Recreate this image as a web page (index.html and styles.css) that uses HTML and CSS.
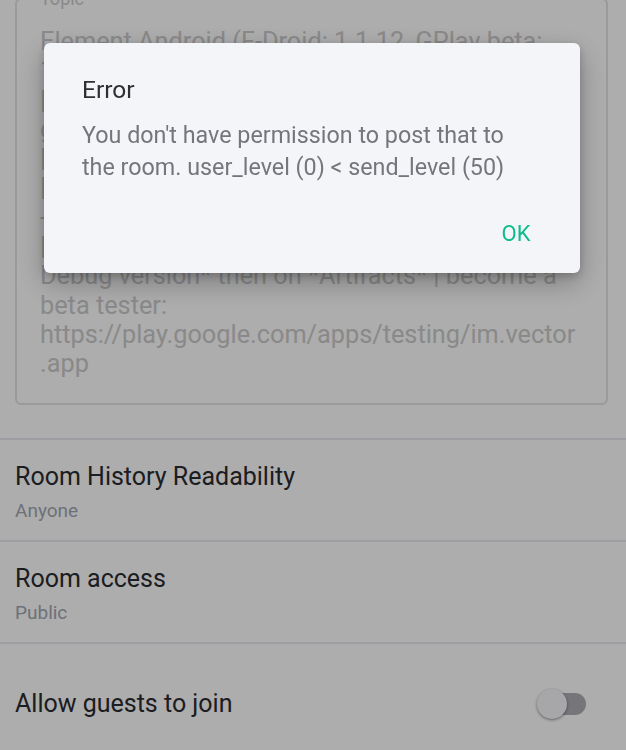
FILE: index.html
```html
<!DOCTYPE html>
<html lang="en">
<head>
    <meta charset="UTF-8">
    <meta name="viewport" content="width=device-width, initial-scale=1.0">
    <title>Room settings</title>
    <link rel="stylesheet" href="styles.css">
</head>
<body>

<div class="settings">
    <fieldset class="topic-field">
        <legend>Topic</legend>
        <p class="topic-text">Element Android (F-Droid: 1.1.12, GPlay beta:<br>
1.1.12, GPlay: 1.1.11) | Element Web<br>
| Source code: https://<br>
github.com/vector-im/element-android<br>
| Changelog: CHANGES.md<br>
| Report bugs in the repo<br>
- Android 5.0 or newer<br>
| Nightly builds: click on *Build<br>
Debug version* then on *Artifacts* | become a<br>
beta tester:<br>
https://play.google.com/apps/testing/im.vector<br>
.app</p>
    </fieldset>

    <div class="pref">
        <div class="pref-title">Room History Readability</div>
        <div class="pref-summary">Anyone</div>
    </div>
    <div class="pref">
        <div class="pref-title">Room access</div>
        <div class="pref-summary">Public</div>
    </div>
    <div class="pref pref-switch">
        <div class="pref-title">Allow guests to join</div>
        <span class="switch"></span>
    </div>
</div>

<!-- Error dialog -->
<div class="modal">
    <div class="dialog">
        <h2 class="dialog-title">Error</h2>
        <p class="dialog-message">You don't have permission to post that to the room. user_level (0) &lt; send_level (50)</p>
        <div class="dialog-actions">
            <button class="dialog-button">OK</button>
        </div>
    </div>
</div>

</body>
</html>
```

FILE: styles.css
```css
body {
    font-family: Roboto, 'Noto Sans', sans-serif;
    background-color: #ffffff;
    margin: 0;
    padding: 0;
    height: 750px;
    overflow: hidden;
}
.settings {
    display: flex;
    flex-direction: column;
}
.topic-field {
    margin: -12px 18px 33px 15px;
    padding: 18px 23px 24px 23px;
    border: 2px solid #e3e3e6;
    border-radius: 6px;
    min-width: 0;
}
.topic-field legend {
    font-size: 18px;
    color: #cbcbcb;
    padding: 0 4px;
    margin-left: -4px;
}
.topic-text {
    margin: 0;
    font-size: 25.3px;
    line-height: 29.3px;
    color: #cbcbcb;
    white-space: nowrap;
}
.pref {
    border-top: 2px solid #e9e9ef;
    padding: 22px 15px 17px;
}
.pref-title {
    font-size: 25px;
    line-height: 30px;
    color: #2a2c30;
}
.pref-summary {
    margin-top: 7px;
    font-size: 19px;
    line-height: 24px;
    color: #a0a7b3;
}
.pref-switch {
    display: flex;
    justify-content: space-between;
    align-items: center;
    padding: 45px 15px;
}
.switch {
    position: relative;
    width: 48px;
    height: 22px;
    margin-right: 25px;
    border-radius: 11px;
    background-color: #afafb4;
}
.switch::before {
    content: '';
    position: absolute;
    left: -1px;
    top: -4px;
    width: 30px;
    height: 30px;
    border-radius: 50%;
    background-color: #f6f7fa;
    box-shadow: 0 1px 3px rgba(0, 0, 0, 0.45);
}
.modal {
    position: fixed;
    left: 0;
    top: 0;
    width: 100%;
    height: 100%;
    background-color: rgba(0, 0, 0, 0.32);
    display: flex;
    align-items: flex-start;
    padding: 43px 46.5px 0 44px;
    box-sizing: border-box;
}
.dialog {
    flex: 1;
    background-color: #f4f5f9;
    border-radius: 6px;
    padding: 31.5px 38px 23.5px;
    box-shadow: 0 10px 28px rgba(0, 0, 0, 0.28), 0 3px 8px rgba(0, 0, 0, 0.18);
}
.dialog-title {
    margin: 0;
    font-size: 24.5px;
    font-weight: 400;
    line-height: 30px;
    color: #2e2f33;
}
.dialog-message {
    margin: 14px 16px 0 0;
    font-size: 23.3px;
    line-height: 32px;
    color: #75767b;
}
.dialog-actions {
    display: flex;
    justify-content: flex-end;
    margin-top: 36.5px;
}
.dialog-button {
    font-family: inherit;
    font-size: 22px;
    line-height: 30px;
    color: #0dbd8b;
    background: none;
    border: none;
    padding: 0 11px;
    cursor: pointer;
}
```
